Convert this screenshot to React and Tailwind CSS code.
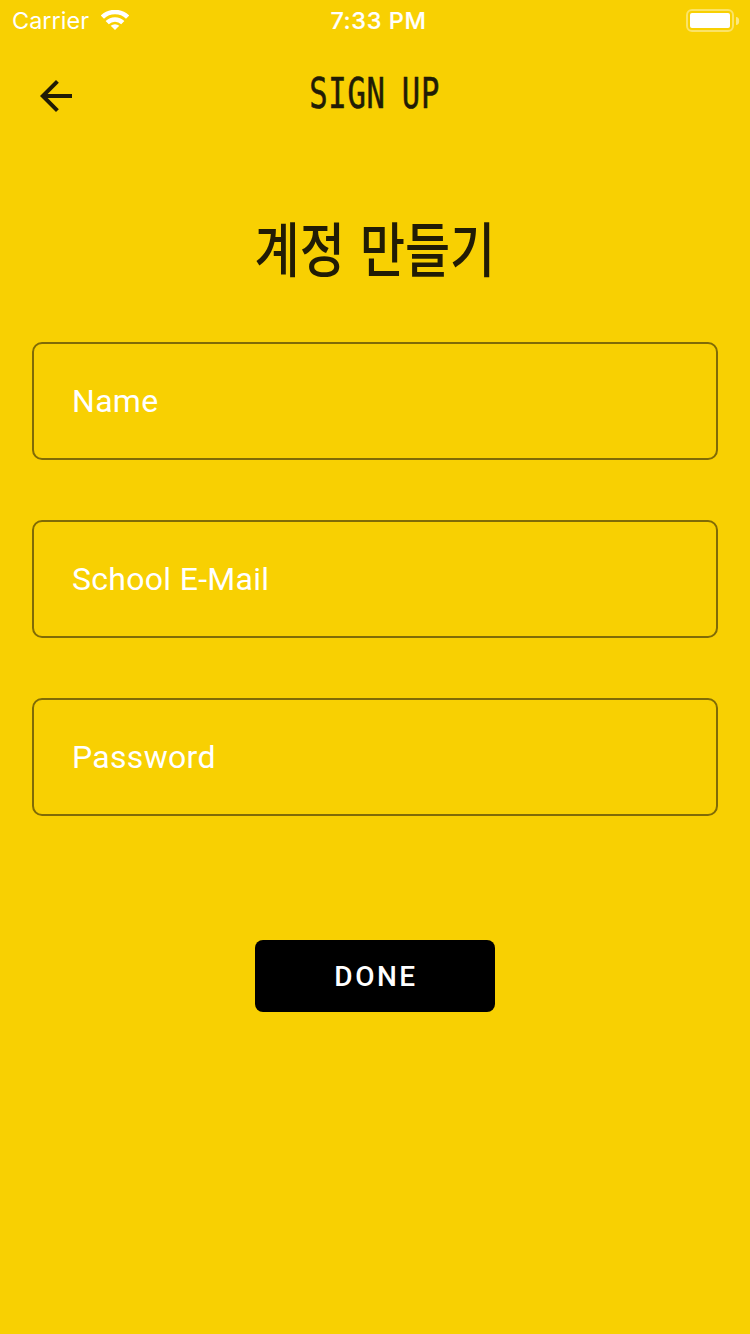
function Field({ label }) {
  return (
    <label className="flex h-[118px] items-center rounded-[10px] border-2 border-[#806b06] px-[38px] text-[32px] tracking-[0.3px] text-white">
      {label}
    </label>
  );
}

export default function App() {
  return (
    <main className="flex h-[1334px] w-[750px] flex-col overflow-hidden bg-[#f8d002] font-['Roboto',sans-serif]">
      <div className="grid h-10 grid-cols-3 items-center pl-3 pr-[10px] pt-[2px] font-['Inter',sans-serif] text-white">
        <div className="flex items-center gap-3">
          <span className="w-[77px] whitespace-nowrap text-[23.5px] leading-none">Carrier</span>
          <svg className="mb-[2px]" width="28" height="20" viewBox="0 0 28 20" fill="none" stroke="white" strokeWidth="4.6">
            <path d="M1.4 7.2a18 18 0 0 1 25.2 0M6.2 12.7a11.2 11.2 0 0 1 15.6 0" />
            <path d="M14 20l-4.3-4.2a6.5 6.5 0 0 1 8.6 0z" fill="white" stroke="none" />
          </svg>
        </div>
        <span className="whitespace-nowrap pl-[5px] text-center text-[23.5px] font-medium leading-none tracking-[0.6px] [-webkit-text-stroke:0.2px_white]">7:33 PM</span>
        <svg className="justify-self-end" width="54" height="24" viewBox="0 0 54 24">
          <rect x="1" y="1" width="46" height="21" rx="5" fill="none" stroke="white" strokeOpacity=".4" strokeWidth="2" />
          <rect x="4" y="4" width="40" height="15" rx="2" fill="white" />
          <path d="M50 8a3.2 4 0 0 1 0 8z" fill="white" fillOpacity=".5" />
        </svg>
      </div>
      <header className="grid h-28 grid-cols-3 items-center px-10">
        <svg width="32" height="32" viewBox="4 4 16 16" fill="#211c05">
          <path d="M20 11H7.83l5.59-5.59L12 4l-8 8 8 8 1.41-1.41L7.83 13H20v-2z" />
        </svg>
        <span className="origin-center scale-x-[.71] whitespace-nowrap pb-[6px] text-center font-['DejaVu_Sans_Mono',monospace] text-[43px] leading-none tracking-[1px] text-[#211c05] [-webkit-text-stroke:0.6px_#211c05] [word-spacing:-4px]">SIGN UP</span>
      </header>
      <h1 className="mt-[55px] flex h-20 items-center justify-center font-['Noto_Sans_CJK_KR',sans-serif] text-[59px] font-medium text-[#211c05]">
        <span className="scale-x-[.83] whitespace-nowrap [word-spacing:5px]">계정 만들기</span>
      </h1>
      <form className="mt-[55px] flex flex-col gap-[60px] px-8">
        <Field label="Name" />
        <Field label="School E-Mail" />
        <Field label="Password" />
      </form>
      <button className="mt-[124px] h-[72px] w-60 self-center rounded-lg bg-black pl-[2px] pt-[2px] text-[28px] font-medium tracking-[2.5px] text-white">DONE</button>
    </main>
  );
}
